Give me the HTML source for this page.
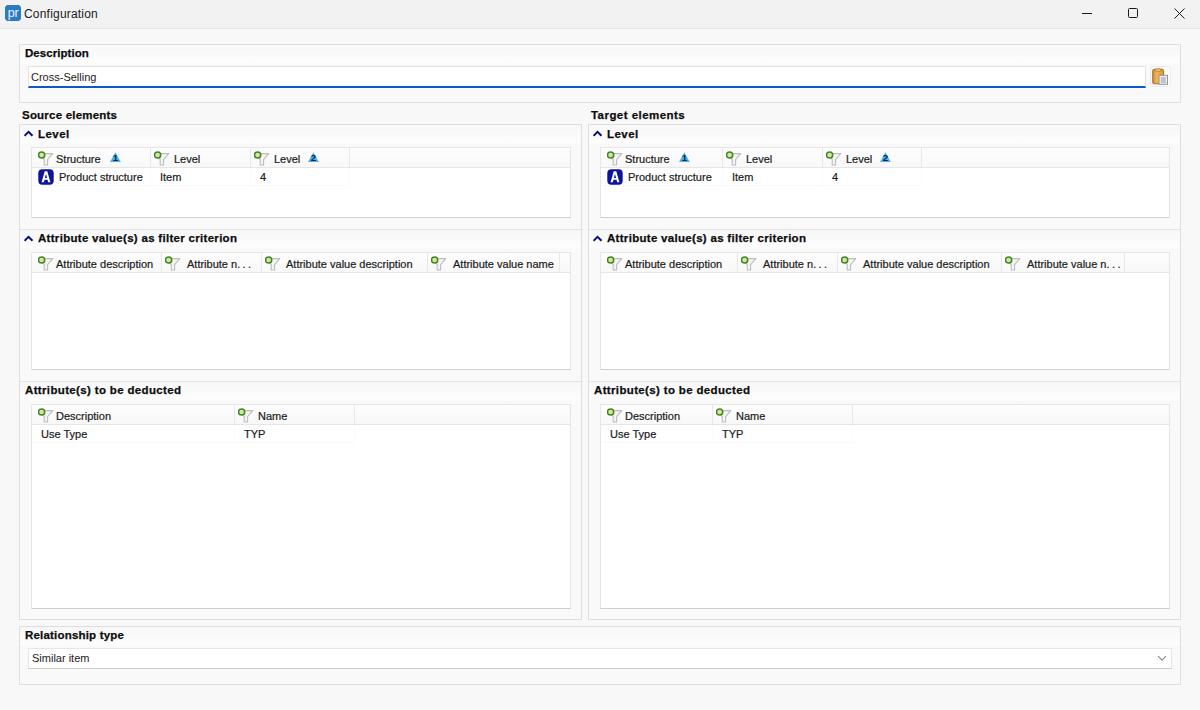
<!DOCTYPE html>
<html><head><meta charset="utf-8">
<style>
*{box-sizing:border-box;margin:0;padding:0}
html,body{width:1200px;height:710px;overflow:hidden}
body{background:#f8f8f8;font-family:"Liberation Sans",sans-serif;font-size:11px;color:#1a1a1a;position:relative}
.abs{position:absolute}
#title{left:0;top:0;width:1200px;height:29px;background:#f2f2f2;border-bottom:1px solid #e6e6e6}
#title .t{left:24px;top:7px;font-size:12px;color:#1a1a1a;letter-spacing:0.2px}
.grp{position:absolute;border:1px solid #dedede;background:linear-gradient(#f7f7f7,#fdfdfd 18px,#f9f9f9 19px,#f9f9f9)}
.lbl{position:absolute;font-weight:bold;font-size:11.5px;color:#0d0d0d;-webkit-text-stroke:0.25px #0d0d0d;letter-spacing:0.55px;white-space:nowrap}
.tbl{position:absolute;background:#fff;border:1px solid #e6e6e6;border-bottom-color:#cfcfcf}
.hdr{position:absolute;left:0;top:0;height:20px;background:linear-gradient(#fdfdfd,#f8f8f8);border-bottom:1px solid #e6e6e6}
.col{position:absolute;top:0;height:19px;border-right:1px solid #e8e8e8}
.ct{position:absolute;top:5px;white-space:nowrap;color:#1a1a1a;-webkit-text-stroke:0.2px #1a1a1a}
.cell{position:absolute;white-space:nowrap;color:#1a1a1a;-webkit-text-stroke:0.2px #1a1a1a}
.ell{letter-spacing:2.4px}
.sep{position:absolute;height:1px;background:#e3e3e3}
.panel{position:absolute;border:1px solid #dedede;background:#f9f9f9}
.psec{position:absolute;background:linear-gradient(#f7f7f7,#fdfdfd 18px,#f9f9f9 19px,#f9f9f9)}
.fiw,.siw,.aiw{position:absolute;line-height:0}
.rowln{position:absolute;height:1px;background:#f9f9f9}
.rcol{position:absolute;border-right:1px solid #fbfbfb}
</style></head><body>
<div id="title" class="abs">
  <svg class="abs" style="left:5px;top:5px" width="16" height="16" viewBox="0 0 16 16"><path d="M2 0H14L16 2V14L14 16H2L0 14V2Z" fill="#2c7bc2"/><text x="8.2" y="11.6" text-anchor="middle" font-family="Liberation Sans" font-size="12.5" fill="#eef4fb">pr</text></svg>
  <div class="abs t">Configuration</div>
  <svg class="abs" style="left:1080px;top:7px" width="110" height="14" viewBox="0 0 110 14">
    <line x1="2" y1="6.5" x2="12" y2="6.5" stroke="#1a1a1a" stroke-width="1"/>
    <rect x="48.5" y="1.5" width="9" height="9" rx="1" fill="none" stroke="#1a1a1a" stroke-width="1"/>
    <path d="M94.5 1.5L104.5 11.5M104.5 1.5L94.5 11.5" stroke="#1a1a1a" stroke-width="1"/>
  </svg>
</div>

<!-- Description -->
<div class="grp" style="left:19px;top:44px;width:1162px;height:59px"></div>
<div class="lbl" style="left:25px;top:47px;letter-spacing:0.05px">Description</div>
<div class="abs" style="left:28px;top:66px;width:1118px;height:22px;background:#fff;border:1px solid #e4e4e4;border-bottom:2px solid #0a5bc4"></div>
<div class="abs" style="left:31px;top:71px;font-size:11px;color:#222">Cross-Selling</div>

<div class="abs" style="left:1150px;top:66px;width:21px;height:21px;border:1px solid #ececec;border-radius:3px;background:#fbfbfb"></div>
<svg class="abs" style="left:1150px;top:66px" width="21" height="21" viewBox="0 0 21 21">
<defs><linearGradient id="cg" x1="0" x2="1" y1="0" y2="0"><stop offset="0" stop-color="#c98a2e"/><stop offset="0.35" stop-color="#f2b458"/><stop offset="1" stop-color="#e0962f"/></linearGradient></defs>
<path d="M2.7 4.5Q2.7 3.3 4 3.3H12.3Q13.6 3.3 13.6 4.5V16.8Q13.6 17.8 12.3 17.8H4Q2.7 17.8 2.7 16.8Z" fill="url(#cg)" stroke="#a8702a" stroke-width="1"/>
<rect x="5.3" y="2.8" width="5.6" height="2.4" rx="0.8" fill="#f3cf86" stroke="#a8702a" stroke-width="0.8"/>
<rect x="9" y="9.3" width="8.5" height="9" fill="#f1f1f3" stroke="#959595" stroke-width="1"/>
<path d="M10.8 12H15.8M10.8 14H15.8M10.8 16H15.8" stroke="#7f86a0" stroke-width="0.9"/>
</svg>
<!-- Source / Target labels -->
<div class="lbl" style="left:22px;top:109px;letter-spacing:0.21px">Source elements</div>
<div class="lbl" style="left:591px;top:109px;letter-spacing:0.45px">Target elements</div>

<!-- panels -->
<div class="panel" style="left:19px;top:124px;width:563px;height:496px"></div>
<div class="psec" style="left:20px;top:125px;width:561px;height:104px"></div>
<div class="psec" style="left:20px;top:230px;width:561px;height:152px"></div>
<div class="psec" style="left:20px;top:382px;width:561px;height:237px"></div>
<div class="sep" style="left:20px;top:229px;width:561px"></div>
<div class="sep" style="left:20px;top:381px;width:561px"></div>
<svg class="abs" style="left:24px;top:130px" width="10" height="7" viewBox="0 0 10 7"><path d="M0.5 5.8L4.5 1.8L8.5 5.8" fill="none" stroke="#0a0f6e" stroke-width="2"/></svg>
<div class="lbl" style="left:38px;top:128px;letter-spacing:0.45px">Level</div>
<svg class="abs" style="left:24px;top:235px" width="10" height="7" viewBox="0 0 10 7"><path d="M0.5 5.8L4.5 1.8L8.5 5.8" fill="none" stroke="#0a0f6e" stroke-width="2"/></svg>
<div class="lbl" style="left:38px;top:232px;letter-spacing:0.3px">Attribute value(s) as filter criterion</div>
<div class="lbl" style="left:25px;top:384px;letter-spacing:0.35px">Attribute(s) to be deducted</div>
<div class="tbl" style="left:31px;top:147px;width:540px;height:71px">
<div class="hdr" style="width:538px"></div>
<div class="col" style="left:0px;width:119px"></div>
<div class="fiw" style="left:6px;top:2px"><svg class="fi" width="18" height="16" viewBox="0 0 18 16"><path d="M1 3.6H14.8L9.6 9.6V15H6.2V9.6Z" fill="#f4f4f4" stroke="#bdbdbd" stroke-width="1.1" stroke-linejoin="round"/><circle cx="3.6" cy="5" r="3.1" fill="#c6eea2" stroke="#4d7f25" stroke-width="1.5"/></svg></div>
<div class="ct" style="left:24px">Structure</div>
<div class="siw" style="left:78px;top:4px"><svg class="si" width="12" height="12" viewBox="0 0 12 12"><path d="M5.4 0.3L10.8 10.1H0Z" fill="#4ab3ee"/><text x="5.6" y="8.9" text-anchor="middle" font-family="Liberation Sans" font-weight="bold" font-size="9.8" fill="#0a1e48">1</text></svg></div>
<div class="col" style="left:119px;width:100px"></div>
<div class="fiw" style="left:122px;top:2px"><svg class="fi" width="18" height="16" viewBox="0 0 18 16"><path d="M1 3.6H14.8L9.6 9.6V15H6.2V9.6Z" fill="#f4f4f4" stroke="#bdbdbd" stroke-width="1.1" stroke-linejoin="round"/><circle cx="3.6" cy="5" r="3.1" fill="#c6eea2" stroke="#4d7f25" stroke-width="1.5"/></svg></div>
<div class="ct" style="left:142px">Level</div>
<div class="col" style="left:219px;width:99px"></div>
<div class="fiw" style="left:222px;top:2px"><svg class="fi" width="18" height="16" viewBox="0 0 18 16"><path d="M1 3.6H14.8L9.6 9.6V15H6.2V9.6Z" fill="#f4f4f4" stroke="#bdbdbd" stroke-width="1.1" stroke-linejoin="round"/><circle cx="3.6" cy="5" r="3.1" fill="#c6eea2" stroke="#4d7f25" stroke-width="1.5"/></svg></div>
<div class="ct" style="left:242px">Level</div>
<div class="siw" style="left:276px;top:4px"><svg class="si" width="12" height="12" viewBox="0 0 12 12"><path d="M5.4 0.3L10.8 10.1H0Z" fill="#4ab3ee"/><text x="5.6" y="8.9" text-anchor="middle" font-family="Liberation Sans" font-weight="bold" font-size="9.8" fill="#0a1e48">2</text></svg></div>
<div class="rowln" style="left:0;top:37px;width:318px"></div>
<div class="rcol" style="left:0px;top:20px;width:119px;height:18px"></div>
<div class="aiw" style="left:6px;top:21px"><svg class="ai" width="16" height="16" viewBox="0 0 16 16"><rect x="0.3" y="0.3" width="15.4" height="15.4" rx="4" fill="#0c139c"/><path fill-rule="evenodd" d="M6.7 2.3H9.3L12.4 13.3H10.2L9.5 10.7H6.5L5.8 13.3H3.6ZM6.95 8.9H9.05L8 4.9Z" fill="#fff"/></svg></div>
<div class="cell" style="left:27px;top:23px">Product structure</div>
<div class="rcol" style="left:119px;top:20px;width:100px;height:18px"></div>
<div class="cell" style="left:128px;top:23px">Item</div>
<div class="rcol" style="left:219px;top:20px;width:99px;height:18px"></div>
<div class="cell" style="left:228px;top:23px">4</div>
</div>
<div class="tbl" style="left:31px;top:252px;width:540px;height:118px">
<div class="hdr" style="width:538px"></div>
<div class="col" style="left:0px;width:130px"></div>
<div class="fiw" style="left:6px;top:2px"><svg class="fi" width="18" height="16" viewBox="0 0 18 16"><path d="M1 3.6H14.8L9.6 9.6V15H6.2V9.6Z" fill="#f4f4f4" stroke="#bdbdbd" stroke-width="1.1" stroke-linejoin="round"/><circle cx="3.6" cy="5" r="3.1" fill="#c6eea2" stroke="#4d7f25" stroke-width="1.5"/></svg></div>
<div class="ct" style="left:24px">Attribute description</div>
<div class="col" style="left:130px;width:100px"></div>
<div class="fiw" style="left:133px;top:2px"><svg class="fi" width="18" height="16" viewBox="0 0 18 16"><path d="M1 3.6H14.8L9.6 9.6V15H6.2V9.6Z" fill="#f4f4f4" stroke="#bdbdbd" stroke-width="1.1" stroke-linejoin="round"/><circle cx="3.6" cy="5" r="3.1" fill="#c6eea2" stroke="#4d7f25" stroke-width="1.5"/></svg></div>
<div class="ct" style="left:155px">Attribute n<span class="ell">...</span></div>
<div class="col" style="left:230px;width:166px"></div>
<div class="fiw" style="left:233px;top:2px"><svg class="fi" width="18" height="16" viewBox="0 0 18 16"><path d="M1 3.6H14.8L9.6 9.6V15H6.2V9.6Z" fill="#f4f4f4" stroke="#bdbdbd" stroke-width="1.1" stroke-linejoin="round"/><circle cx="3.6" cy="5" r="3.1" fill="#c6eea2" stroke="#4d7f25" stroke-width="1.5"/></svg></div>
<div class="ct" style="left:254px">Attribute value description</div>
<div class="col" style="left:396px;width:132px"></div>
<div class="fiw" style="left:399px;top:2px"><svg class="fi" width="18" height="16" viewBox="0 0 18 16"><path d="M1 3.6H14.8L9.6 9.6V15H6.2V9.6Z" fill="#f4f4f4" stroke="#bdbdbd" stroke-width="1.1" stroke-linejoin="round"/><circle cx="3.6" cy="5" r="3.1" fill="#c6eea2" stroke="#4d7f25" stroke-width="1.5"/></svg></div>
<div class="ct" style="left:421px">Attribute value name</div>
</div>
<div class="tbl" style="left:31px;top:404px;width:540px;height:205px">
<div class="hdr" style="width:538px"></div>
<div class="col" style="left:0px;width:203px"></div>
<div class="fiw" style="left:6px;top:2px"><svg class="fi" width="18" height="16" viewBox="0 0 18 16"><path d="M1 3.6H14.8L9.6 9.6V15H6.2V9.6Z" fill="#f4f4f4" stroke="#bdbdbd" stroke-width="1.1" stroke-linejoin="round"/><circle cx="3.6" cy="5" r="3.1" fill="#c6eea2" stroke="#4d7f25" stroke-width="1.5"/></svg></div>
<div class="ct" style="left:24px">Description</div>
<div class="col" style="left:203px;width:120px"></div>
<div class="fiw" style="left:206px;top:2px"><svg class="fi" width="18" height="16" viewBox="0 0 18 16"><path d="M1 3.6H14.8L9.6 9.6V15H6.2V9.6Z" fill="#f4f4f4" stroke="#bdbdbd" stroke-width="1.1" stroke-linejoin="round"/><circle cx="3.6" cy="5" r="3.1" fill="#c6eea2" stroke="#4d7f25" stroke-width="1.5"/></svg></div>
<div class="ct" style="left:226px">Name</div>
<div class="rowln" style="left:0;top:37px;width:323px"></div>
<div class="rcol" style="left:0px;top:20px;width:203px;height:18px"></div>
<div class="cell" style="left:9px;top:23px">Use Type</div>
<div class="rcol" style="left:203px;top:20px;width:120px;height:18px"></div>
<div class="cell" style="left:212px;top:23px">TYP</div>
</div>
<div class="panel" style="left:588px;top:124px;width:593px;height:496px"></div>
<div class="psec" style="left:589px;top:125px;width:591px;height:104px"></div>
<div class="psec" style="left:589px;top:230px;width:591px;height:152px"></div>
<div class="psec" style="left:589px;top:382px;width:591px;height:237px"></div>
<div class="sep" style="left:589px;top:229px;width:591px"></div>
<div class="sep" style="left:589px;top:381px;width:591px"></div>
<svg class="abs" style="left:593px;top:130px" width="10" height="7" viewBox="0 0 10 7"><path d="M0.5 5.8L4.5 1.8L8.5 5.8" fill="none" stroke="#0a0f6e" stroke-width="2"/></svg>
<div class="lbl" style="left:607px;top:128px;letter-spacing:0.45px">Level</div>
<svg class="abs" style="left:593px;top:235px" width="10" height="7" viewBox="0 0 10 7"><path d="M0.5 5.8L4.5 1.8L8.5 5.8" fill="none" stroke="#0a0f6e" stroke-width="2"/></svg>
<div class="lbl" style="left:607px;top:232px;letter-spacing:0.3px">Attribute value(s) as filter criterion</div>
<div class="lbl" style="left:594px;top:384px;letter-spacing:0.35px">Attribute(s) to be deducted</div>
<div class="tbl" style="left:600px;top:147px;width:570px;height:71px">
<div class="hdr" style="width:568px"></div>
<div class="col" style="left:0px;width:122px"></div>
<div class="fiw" style="left:6px;top:2px"><svg class="fi" width="18" height="16" viewBox="0 0 18 16"><path d="M1 3.6H14.8L9.6 9.6V15H6.2V9.6Z" fill="#f4f4f4" stroke="#bdbdbd" stroke-width="1.1" stroke-linejoin="round"/><circle cx="3.6" cy="5" r="3.1" fill="#c6eea2" stroke="#4d7f25" stroke-width="1.5"/></svg></div>
<div class="ct" style="left:24px">Structure</div>
<div class="siw" style="left:78px;top:4px"><svg class="si" width="12" height="12" viewBox="0 0 12 12"><path d="M5.4 0.3L10.8 10.1H0Z" fill="#4ab3ee"/><text x="5.6" y="8.9" text-anchor="middle" font-family="Liberation Sans" font-weight="bold" font-size="9.8" fill="#0a1e48">1</text></svg></div>
<div class="col" style="left:122px;width:100px"></div>
<div class="fiw" style="left:125px;top:2px"><svg class="fi" width="18" height="16" viewBox="0 0 18 16"><path d="M1 3.6H14.8L9.6 9.6V15H6.2V9.6Z" fill="#f4f4f4" stroke="#bdbdbd" stroke-width="1.1" stroke-linejoin="round"/><circle cx="3.6" cy="5" r="3.1" fill="#c6eea2" stroke="#4d7f25" stroke-width="1.5"/></svg></div>
<div class="ct" style="left:145px">Level</div>
<div class="col" style="left:222px;width:99px"></div>
<div class="fiw" style="left:225px;top:2px"><svg class="fi" width="18" height="16" viewBox="0 0 18 16"><path d="M1 3.6H14.8L9.6 9.6V15H6.2V9.6Z" fill="#f4f4f4" stroke="#bdbdbd" stroke-width="1.1" stroke-linejoin="round"/><circle cx="3.6" cy="5" r="3.1" fill="#c6eea2" stroke="#4d7f25" stroke-width="1.5"/></svg></div>
<div class="ct" style="left:245px">Level</div>
<div class="siw" style="left:279px;top:4px"><svg class="si" width="12" height="12" viewBox="0 0 12 12"><path d="M5.4 0.3L10.8 10.1H0Z" fill="#4ab3ee"/><text x="5.6" y="8.9" text-anchor="middle" font-family="Liberation Sans" font-weight="bold" font-size="9.8" fill="#0a1e48">2</text></svg></div>
<div class="rowln" style="left:0;top:37px;width:321px"></div>
<div class="rcol" style="left:0px;top:20px;width:122px;height:18px"></div>
<div class="aiw" style="left:6px;top:21px"><svg class="ai" width="16" height="16" viewBox="0 0 16 16"><rect x="0.3" y="0.3" width="15.4" height="15.4" rx="4" fill="#0c139c"/><path fill-rule="evenodd" d="M6.7 2.3H9.3L12.4 13.3H10.2L9.5 10.7H6.5L5.8 13.3H3.6ZM6.95 8.9H9.05L8 4.9Z" fill="#fff"/></svg></div>
<div class="cell" style="left:27px;top:23px">Product structure</div>
<div class="rcol" style="left:122px;top:20px;width:100px;height:18px"></div>
<div class="cell" style="left:131px;top:23px">Item</div>
<div class="rcol" style="left:222px;top:20px;width:99px;height:18px"></div>
<div class="cell" style="left:231px;top:23px">4</div>
</div>
<div class="tbl" style="left:600px;top:252px;width:570px;height:118px">
<div class="hdr" style="width:568px"></div>
<div class="col" style="left:0px;width:137px"></div>
<div class="fiw" style="left:6px;top:2px"><svg class="fi" width="18" height="16" viewBox="0 0 18 16"><path d="M1 3.6H14.8L9.6 9.6V15H6.2V9.6Z" fill="#f4f4f4" stroke="#bdbdbd" stroke-width="1.1" stroke-linejoin="round"/><circle cx="3.6" cy="5" r="3.1" fill="#c6eea2" stroke="#4d7f25" stroke-width="1.5"/></svg></div>
<div class="ct" style="left:24px">Attribute description</div>
<div class="col" style="left:137px;width:100px"></div>
<div class="fiw" style="left:140px;top:2px"><svg class="fi" width="18" height="16" viewBox="0 0 18 16"><path d="M1 3.6H14.8L9.6 9.6V15H6.2V9.6Z" fill="#f4f4f4" stroke="#bdbdbd" stroke-width="1.1" stroke-linejoin="round"/><circle cx="3.6" cy="5" r="3.1" fill="#c6eea2" stroke="#4d7f25" stroke-width="1.5"/></svg></div>
<div class="ct" style="left:162px">Attribute n<span class="ell">...</span></div>
<div class="col" style="left:237px;width:164px"></div>
<div class="fiw" style="left:240px;top:2px"><svg class="fi" width="18" height="16" viewBox="0 0 18 16"><path d="M1 3.6H14.8L9.6 9.6V15H6.2V9.6Z" fill="#f4f4f4" stroke="#bdbdbd" stroke-width="1.1" stroke-linejoin="round"/><circle cx="3.6" cy="5" r="3.1" fill="#c6eea2" stroke="#4d7f25" stroke-width="1.5"/></svg></div>
<div class="ct" style="left:262px">Attribute value description</div>
<div class="col" style="left:401px;width:123px"></div>
<div class="fiw" style="left:404px;top:2px"><svg class="fi" width="18" height="16" viewBox="0 0 18 16"><path d="M1 3.6H14.8L9.6 9.6V15H6.2V9.6Z" fill="#f4f4f4" stroke="#bdbdbd" stroke-width="1.1" stroke-linejoin="round"/><circle cx="3.6" cy="5" r="3.1" fill="#c6eea2" stroke="#4d7f25" stroke-width="1.5"/></svg></div>
<div class="ct" style="left:426px">Attribute value n<span class="ell">...</span></div>
</div>
<div class="tbl" style="left:600px;top:404px;width:570px;height:205px">
<div class="hdr" style="width:568px"></div>
<div class="col" style="left:0px;width:112px"></div>
<div class="fiw" style="left:6px;top:2px"><svg class="fi" width="18" height="16" viewBox="0 0 18 16"><path d="M1 3.6H14.8L9.6 9.6V15H6.2V9.6Z" fill="#f4f4f4" stroke="#bdbdbd" stroke-width="1.1" stroke-linejoin="round"/><circle cx="3.6" cy="5" r="3.1" fill="#c6eea2" stroke="#4d7f25" stroke-width="1.5"/></svg></div>
<div class="ct" style="left:24px">Description</div>
<div class="col" style="left:112px;width:140px"></div>
<div class="fiw" style="left:115px;top:2px"><svg class="fi" width="18" height="16" viewBox="0 0 18 16"><path d="M1 3.6H14.8L9.6 9.6V15H6.2V9.6Z" fill="#f4f4f4" stroke="#bdbdbd" stroke-width="1.1" stroke-linejoin="round"/><circle cx="3.6" cy="5" r="3.1" fill="#c6eea2" stroke="#4d7f25" stroke-width="1.5"/></svg></div>
<div class="ct" style="left:135px">Name</div>
<div class="rowln" style="left:0;top:37px;width:252px"></div>
<div class="rcol" style="left:0px;top:20px;width:112px;height:18px"></div>
<div class="cell" style="left:9px;top:23px">Use Type</div>
<div class="rcol" style="left:112px;top:20px;width:140px;height:18px"></div>
<div class="cell" style="left:121px;top:23px">TYP</div>
</div>

<!-- Relationship type -->
<div class="grp" style="left:19px;top:626px;width:1162px;height:59px"></div>
<div class="lbl" style="left:25px;top:629px;letter-spacing:0.19px">Relationship type</div>
<div class="abs" style="left:28px;top:648px;width:1144px;height:21px;background:#fff;border:1px solid #e6e6e6;border-bottom-color:#cfcfcf"></div>
<div class="abs" style="left:32px;top:652px;font-size:11px;color:#222">Similar item</div>
<svg class="abs" style="left:1157px;top:655px" width="10" height="7" viewBox="0 0 10 7"><path d="M1 1.2L5 5.2L9 1.2" fill="none" stroke="#8a8a8a" stroke-width="1.1"/></svg>
</body></html>
